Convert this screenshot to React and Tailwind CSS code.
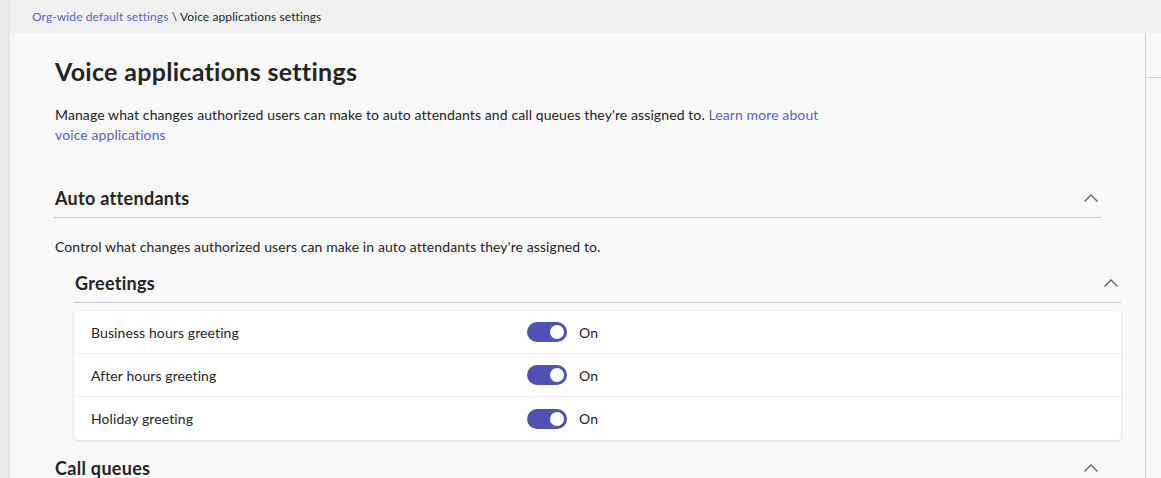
import React from "react";

const Chevron = () => (
  <svg width="16" height="10" viewBox="0 0 16 10" className="shrink-0">
    <polyline points="1.5,8.5 8,2 14.5,8.5" fill="none" stroke="#616161" strokeWidth="1.3" />
  </svg>
);

const Toggle = () => (
  <div className="flex items-center gap-3">
    <div className="w-[40px] h-[20px] rounded-full bg-[#4f52b2] flex items-center justify-end pr-[3px]">
      <div className="w-[14px] h-[14px] rounded-full bg-white" />
    </div>
    <span className="text-[14px] text-[#242424]">On</span>
  </div>
);

const rows = ["Business hours greeting", "After hours greeting", "Holiday greeting"];

export default function App() {
  return (
    <div
      className="flex h-[478px] w-full overflow-hidden bg-[#f8f8f8] text-[#242424] tracking-[0.1px]"
      style={{ fontFamily: '"Lato", "Open Sans", "Noto Sans", sans-serif' }}
    >
      <div className="w-[10px] shrink-0 bg-[#e8e8e8] border-r border-[#e0e0e0]" />
      <div className="flex-1 flex flex-col min-w-0">
        <div className="h-[33px] shrink-0 bg-[#f0f0f0] flex items-center pl-[22px] text-[12px]">
          <span className="text-[#5b5fc7]">Org-wide default settings</span>
          <span className="text-[#242424]">&nbsp;\ Voice applications settings</span>
        </div>
        <div className="flex flex-1 min-h-0">
          <div className="flex-1 min-w-0 pl-[44px] pr-[44px]">
            <h1 className="pt-[22px] text-[25px] leading-[32px] font-bold tracking-[0.3px] pl-[1px]">Voice applications settings</h1>
            <p className="mt-[18px] text-[14px] leading-[20px] pl-[1px]">
              Manage what changes authorized users can make to auto attendants and call queues they're assigned to.{" "}
              <span className="text-[#5b5fc7]">Learn more about<br />voice applications</span>
            </p>

            <div className="mt-[41px] flex items-center justify-between border-b border-[#c8c8c8] pb-[7px]">
              <h2 className="text-[18px] leading-[24px] font-bold tracking-[0.3px] pl-[1px]">Auto attendants</h2>
              <div className="mr-[2px]"><Chevron /></div>
            </div>
            <p className="mt-[19px] text-[14px] leading-[20px] pl-[1px]">
              Control what changes authorized users can make in auto attendants they're assigned to.
            </p>

            <div className="ml-[20px] mr-[-20px]">
              <div className="mt-[14px] flex items-center justify-between border-b border-[#c8c8c8] pb-[7px]">
                <h3 className="text-[18px] leading-[24px] font-bold tracking-[0.3px] pl-[1px]">Greetings</h3>
                <div className="mr-[2px]"><Chevron /></div>
              </div>
              <div className="mt-[8px] bg-white rounded-[4px] shadow-[0_1px_3px_rgba(0,0,0,0.12),0_0_1px_rgba(0,0,0,0.08)]">
                {rows.map((r, i) => (
                  <div
                    key={r}
                    className={`h-[43px] flex items-center pl-[17px] ${i < rows.length - 1 ? "border-b border-[#f0f0f0]" : ""}`}
                  >
                    <span className="w-[436px] text-[14px]">{r}</span>
                    <Toggle />
                  </div>
                ))}
              </div>
            </div>

            <div className="mt-[16px] flex items-center justify-between">
              <h2 className="text-[18px] leading-[24px] font-bold tracking-[0.3px] pl-[1px]">Call queues</h2>
              <div className="mr-[2px]"><Chevron /></div>
            </div>
          </div>
          <div className="w-[16px] shrink-0 border-l border-[#d1d1d1]">
            <div className="h-[45px] border-b border-[#d1d1d1]" />
          </div>
        </div>
      </div>
    </div>
  );
}
